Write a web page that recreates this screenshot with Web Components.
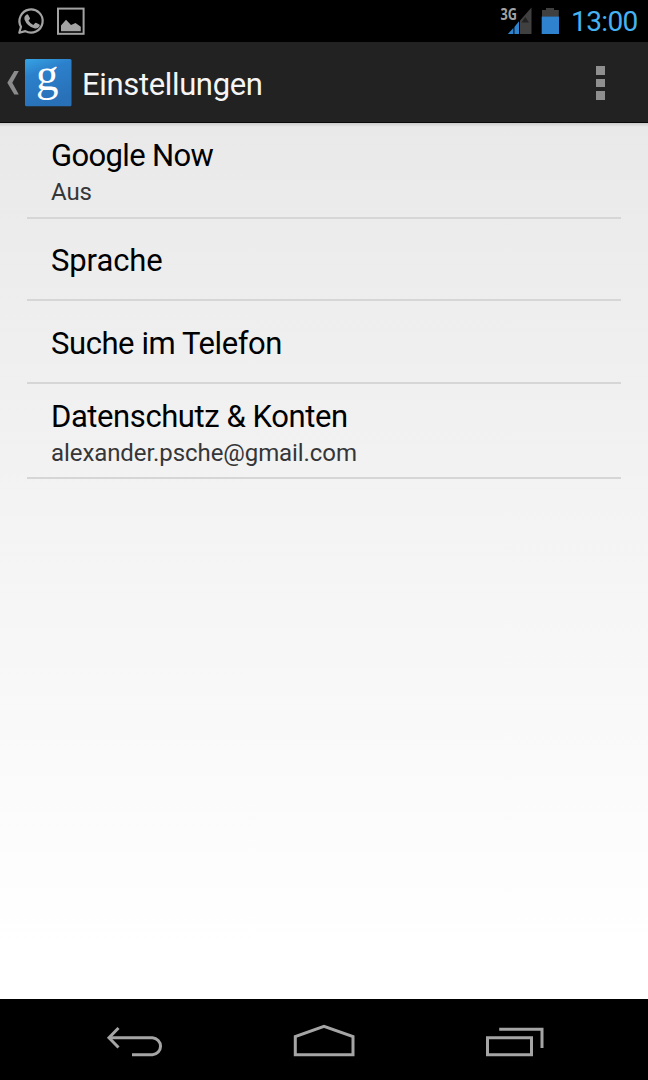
<!DOCTYPE html>
<html lang="de">
<head>
<meta charset="utf-8">
<title>Einstellungen</title>
<style>
  html, body {
    margin: 0;
    height: 100%;
    background: #000;
    font-family: Roboto, "Noto Sans", sans-serif;
  }
</style>
</head>
<body>
<settings-screen></settings-screen>

<script>
class StatusBar extends HTMLElement {
  constructor() {
    super();
    this.attachShadow({ mode: "open" });
  }

  connectedCallback() {
    this.shadowRoot.innerHTML = `
      <style>
        :host {
          display: flex;
          justify-content: space-between;
          height: 42px;
          background: #000;
        }
        svg { display: block; flex: none; }
        .rechts { display: flex; }
        time {
          width: 77px;
          font-size: 28px;
          line-height: 44px;
          letter-spacing: -0.6px;
          color: #45b3f2;
          white-space: nowrap;
        }
      </style>
      <svg width="100" height="42" viewBox="0 0 100 42">
        <g fill="none" stroke="#a3a3a3" stroke-width="2.2">
          <path d="M19.3 32.8 L21 26.8 A11.6 11.6 0 1 1 25.3 31.1 Z" stroke-linejoin="round"/>
          <rect x="58" y="8.6" width="25.6" height="25.2" stroke-width="2"/>
        </g>
        <path fill="#a3a3a3" d="M26.3 14.7 q1.2-.8 2 .2 l1.7 3.3 q.2.9-1.5 2.4 q1.6 3.1 4.8 4.5 l1.8-2 q.7-.5 1.4-.1 l2.9 1.6 q.8.5 0 1.9 q-1.8 2.7-5.2 1.8 q-7.2-2.1-9.7-8.8 q-.7-3 1.8-4.8z"/>
        <path fill="#a3a3a3" d="M61 31.2 V25.5 L66 19.8 L71 25 L75.5 23 L80.8 26.8 V31.2Z"/>
      </svg>
      <div class="rechts">
        <svg width="73" height="42" viewBox="498 0 73 42">
          <text x="500.5" y="19.6" font-family="Open Sans" font-size="15.5" font-weight="700" fill="#a3a3a3" textLength="16.5" lengthAdjust="spacingAndGlyphs">3G</text>
          <path fill="#404040" d="M531.5 7.5 V34 H520 V20.5Z"/>
          <path fill="#222" d="M521.5 22.5 L525.3 17 L529 22.5Z"/>
          <path fill="#2f82cd" d="M507.8 34 L513.4 28 V34Z M514.4 27 L519 21.3 V34 H514.4Z"/>
          <path fill="#404040" d="M542 10 H546 V8 H554 V10 H558.8 V17 H542Z"/>
          <path fill="#2f82cd" d="M541.7 16.6 H559 V34 H541.7Z"/>
        </svg>
        <time>13:00</time>
      </div>
    `;
  }
}

class ActionBar extends HTMLElement {
  constructor() {
    super();
    this.attachShadow({ mode: "open" });
  }

  connectedCallback() {
    this.shadowRoot.innerHTML = `
      <style>
        :host {
          display: flex;
          align-items: center;
          box-sizing: border-box;
          height: 81px;
          background: #222;
          border-bottom: 1px solid #090909;
        }
        svg { display: block; flex: none; }
        h1 {
          flex: 1;
          margin: 0 0 0 2px;
          font-size: 31px;
          line-height: 40px;
          font-weight: 400;
          letter-spacing: -0.35px;
          color: #f5f5f5;
          padding-top: 5px;
        }
        .menu {
          display: grid;
          gap: 4px;
          margin: 2px 43px 0 0;
        }
        .menu i { width: 9px; height: 8.6px; background: #8f8f8f; }
      </style>
      <svg width="80" height="80" viewBox="0 42 80 80">
        <defs>
          <linearGradient id="blau" x1="0" y1="0" x2=".35" y2="1">
            <stop offset="0" stop-color="#36a4e4"/>
            <stop offset=".35" stop-color="#2c80cb"/>
            <stop offset="1" stop-color="#2871b8"/>
          </linearGradient>
        </defs>
        <path fill="#8b8b8b" d="M14.3 71 H18.8 L12.3 82.8 L18.8 94.5 H14.3 L7.3 82.8Z"/>
        <rect x="25" y="59" width="46.5" height="47.2" rx="1.5" fill="url(#blau)"/>
        <text x="36" y="89.5" font-family="'Liberation Serif', serif" font-size="47" fill="#fff" textLength="22.5" lengthAdjust="spacingAndGlyphs">g</text>
      </svg>
      <h1><slot></slot></h1>
      <div class="menu"><i></i><i></i><i></i></div>
    `;
  }
}

class SettingsItem extends HTMLElement {
  constructor() {
    super();
    this.attachShadow({ mode: "open" });
  }

  connectedCallback() {
    const detalle = this.hasAttribute("summary");
    this.shadowRoot.innerHTML = `
      <style>
        :host {
          display: flex;
          flex-direction: column;
          justify-content: center;
          box-sizing: border-box;
          height: ${detalle ? 95.3 : 82.6}px;
          padding: ${detalle ? 6 : 4}px 24px 0;
          border-bottom: 2px solid #d6d6d6;
          white-space: nowrap;
        }
        .titel {
          font-size: 31px;
          line-height: 38px;
          color: #000;
          letter-spacing: var(--titel-abstand, -0.42px);
        }
        .info {
          font-size: 24px;
          line-height: 34px;
          letter-spacing: -0.08px;
          color: #363638;
        }
      </style>
      <div class="titel"><slot></slot></div>
      ${detalle ? `<div class="info">${this.getAttribute("summary")}</div>` : ""}
    `;
  }
}

class NavBar extends HTMLElement {
  constructor() {
    super();
    this.attachShadow({ mode: "open" });
  }

  connectedCallback() {
    this.shadowRoot.innerHTML = `
      <style>
        :host { display: block; height: 81px; background: #000; }
        svg { display: block; }
      </style>
      <svg width="648" height="81" viewBox="0 999 648 81" fill="none" stroke="#a5a5a5" stroke-width="3">
        <path d="M110 1037.7 H152.5 A9 8.6 0 0 1 152.5 1054.8 H132"/>
        <path d="M118.5 1028 L109 1037.7 L118.5 1047.5"/>
        <path d="M295.3 1054.7 V1036.5 L324 1026.3 L353 1036.5 V1054.7Z"/>
        <path d="M487.5 1037.7 H531.5 V1054.8 H487.5Z M499.2 1029.3 H542 V1048"/>
      </svg>
    `;
  }
}

class SettingsScreen extends HTMLElement {
  constructor() {
    super();
    this.attachShadow({ mode: "open" });
  }

  connectedCallback() {
    this.shadowRoot.innerHTML = `
      <style>
        :host {
          display: flex;
          flex-direction: column;
          width: 648px;
          height: 1080px;
          overflow: hidden;
        }
        main {
          flex: 1;
          padding: 0.4px 27px 0;
          background:
            linear-gradient(rgba(0, 0, 0, 0.13), rgba(0, 0, 0, 0) 4px),
            linear-gradient(#e9e9e9, #fff 94%);
        }
        .eng { --titel-abstand: -0.65px; }
        .weit { --titel-abstand: -0.1px; }
      </style>
      <status-bar></status-bar>
      <action-bar>Einstellungen</action-bar>
      <main>
        <settings-item class="eng" summary="Aus">Google Now</settings-item>
        <settings-item class="weit">Sprache</settings-item>
        <settings-item>Suche im Telefon</settings-item>
        <settings-item summary="alexander.psche@gmail.com">Datenschutz &amp; Konten</settings-item>
      </main>
      <nav-bar></nav-bar>
    `;
  }
}

customElements.define("status-bar", StatusBar);
customElements.define("action-bar", ActionBar);
customElements.define("settings-item", SettingsItem);
customElements.define("nav-bar", NavBar);
customElements.define("settings-screen", SettingsScreen);
</script>
</body>
</html>
